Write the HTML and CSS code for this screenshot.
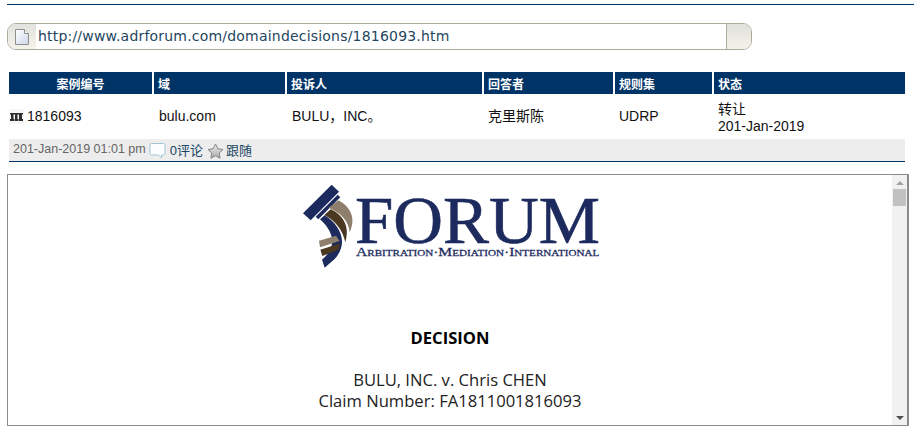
FILE: index.html
```html
<!DOCTYPE html>
<html lang="zh-CN">
<head>
    <meta charset="UTF-8">
    <title>1816093</title>
    <link rel="stylesheet" href="styles.css">
</head>
<body>

<div class="topline"></div>

<div class="urlbar">
    <div class="urlbar-left">
        <svg width="16" height="18" viewBox="0 0 16 18">
            <defs>
                <linearGradient id="page" x1="0" y1="0" x2="1" y2="1">
                    <stop offset="0" stop-color="#fff"/>
                    <stop offset="1" stop-color="#cdd6ec"/>
                </linearGradient>
            </defs>
            <path d="M1.500 1.500h9l4 4v11h-13z" fill="url(#page)" stroke="#8f8f8f"/>
            <path d="M10.500 1.500v4h4" fill="#fff" stroke="#8f8f8f"/>
        </svg>
    </div>
    <div class="urlbar-text">http://www.adrforum.com/domaindecisions/1816093.htm</div>
    <div class="urlbar-right"></div>
</div>

<table class="cases">
    <colgroup>
        <col class="c1"><col class="c2"><col class="c3"><col class="c4"><col class="c5"><col class="c6">
    </colgroup>
    <thead>
    <tr>
        <th class="center">案例编号</th>
        <th>域</th>
        <th>投诉人</th>
        <th>回答者</th>
        <th>规则集</th>
        <th>状态</th>
    </tr>
    </thead>
    <tbody>
    <tr>
        <td class="first">
            <span class="caseicon">
                <svg width="15" height="15" viewBox="0 0 15 15">
                    <path d="M1 4h13v1.500h-1V10h1v2H9.500v-2h.5V5.500H8.500V10H9v2H5.500v-2H6V5.500H4.500V10H5v2H1v-2h1V5.500H1z" fill="#2e2e2e"/>
                </svg>
            </span>1816093
        </td>
        <td class="domain">bulu.com</td>
        <td class="claimant">BULU，INC。</td>
        <td>克里斯陈</td>
        <td>UDRP</td>
        <td class="status">转让<br>201-Jan-2019</td>
    </tr>
    </tbody>
</table>

<div class="meta">
    <span class="date">201-Jan-2019 01:01 pm</span>
    <svg class="bubble" width="17" height="17" viewBox="0 0 17 17">
        <path d="M2.500 1.500h12a1.500 1.500 0 0 1 1.500 1.500v8.500a1.500 1.500 0 0 1-1.500 1.500h-2v3l-3-3h-7a1.500 1.500 0 0 1-1.500-1.500V3a1.500 1.500 0 0 1 1.500-1.500z" fill="#fbfdfe" stroke="#a4c2d4"/>
    </svg>
    <a class="metalink">0评论</a>
    <svg class="star" width="17" height="16" viewBox="0 0 17 16">
        <defs>
            <linearGradient id="star" x1="0" y1="0" x2="0" y2="1">
                <stop offset="0" stop-color="#eee"/>
                <stop offset="1" stop-color="#aaa"/>
            </linearGradient>
        </defs>
        <path d="M8.500 1l2.300 4.700 5.200.8-3.800 3.600.9 5.100-4.600-2.400-4.600 2.400.9-5.100L1 6.500l5.200-.8z" fill="url(#star)" stroke="#858585"/>
    </svg>
    <a class="metalink">跟随</a>
</div>

<div class="frame">
    <div class="doc">
        <svg class="logo" width="320" height="100" viewBox="0 0 960 300">
            <path d="M39 115L125 29 147 50 62 136z" fill="#1c2a5e"/>
            <path d="M77 125L143 59 151 67 85 133z" fill="#1c2a5e"/>
            <path d="M116 98L145 76C180 94 200 130 179 172 177 138 150 112 116 98z" fill="#8d7f6b"/>
            <path d="M103 120L122 103C154 118 182 148 166 202 158 164 135 136 103 120z" fill="#4a3820"/>
            <path d="M90 133L104 121C150 150 178 204 134 252L104 278 96 254C126 230 148 185 90 133z" fill="#1c2a5e"/>
            <path d="M87 197L138 182 149 198 90 217z" fill="#8d7f6b"/>
            <path d="M91 224L151 205 146 224 97 243z" fill="#4a3820"/>
            <text class="logo-name" x="195" y="205" textLength="735" lengthAdjust="spacingAndGlyphs">FORUM</text>
            <text class="logo-sub" x="198" y="243" textLength="730" lengthAdjust="spacingAndGlyphs">Arbitration·Mediation·International</text>
        </svg>
        <p class="title">DECISION</p>
        <p class="parties">BULU, INC. v. Chris CHEN<br>Claim Number: FA1811001816093</p>
    </div>
    <div class="scrollbar">
        <div class="arrow-up"></div>
        <div class="thumb"></div>
        <div class="arrow-down"></div>
    </div>
</div>

</body>
</html>
```

FILE: styles.css
```css
html, body {
    margin: 0;
    padding: 0;
    background-color: #fff;
}
body {
    font-family: "Liberation Sans", "Noto Sans CJK SC", sans-serif;
    font-size: 14px;
    color: #111;
    overflow: hidden;
}

.topline {
    height: 1px;
    margin: 4px 0 0 7px;
    background-color: #003366;
}

/* url bar */
.urlbar {
    display: flex;
    width: 745px;
    height: 27px;
    margin: 18px 0 0 7px;
    box-sizing: border-box;
    border: 1px solid #aeaa9c;
    border-radius: 9px;
    overflow: hidden;
}
.urlbar-left {
    display: flex;
    align-items: center;
    justify-content: center;
    width: 28px;
    background: linear-gradient(#e2e2de, #f4f3ea);
}
.urlbar-text {
    flex: 1;
    padding-left: 2px;
    font-family: "DejaVu Sans", sans-serif;
    font-size: 14px;
    letter-spacing: 0.2px;
    line-height: 24px;
    color: #24465f;
    background-color: #fff;
}
.urlbar-right {
    width: 24px;
    border-left: 1px solid #aeaa9c;
    background: linear-gradient(#e0e0dc, #f4f3ea);
}

/* table */
.cases {
    margin: 22px 0 0 7px;
    border-collapse: separate;
    border-spacing: 2px 0;
    table-layout: fixed;
    width: 900px;
}
.c1 { width: 143px; }
.c2 { width: 131px; }
.c3 { width: 195px; }
.c4 { width: 129px; }
.c5 { width: 97px; }
.c6 { width: 191px; }

.cases th {
    height: 22px;
    padding: 0 0 0 4px;
    background-color: #003366;
    color: #fff;
    font-size: 12px;
    font-weight: bold;
    text-align: left;
}
.cases th.center {
    padding: 0;
    text-align: center;
}
.cases td {
    height: 45px;
    padding: 0 0 0 4px;
    line-height: 17px;
}
.cases td.first {
    padding-left: 0;
}
.cases td.domain {
    padding-left: 5px;
}
.cases td.claimant {
    padding-left: 5px;
}
.cases td.status {
    padding-top: 2px;
    height: 43px;
}
.caseicon {
    display: inline-block;
    width: 15px;
    height: 15px;
    margin-right: 3px;
    vertical-align: -3px;
    background-color: #f6f6f6;
}

/* grey row */
.meta {
    display: flex;
    align-items: center;
    height: 22px;
    margin-left: 9px;
    margin-right: 9px;
    padding-left: 4px;
    background-color: #ededed;
    border-bottom: 1px solid #003366;
    font-size: 12.5px;
}
.date {
    color: #666;
    margin-bottom: 3px;
}
.bubble {
    margin: 1px 4px 0 3px;
}
.star {
    margin: 2px 2px 0 4px;
}
.metalink {
    color: #1a4766;
    font-size: 13px;
    margin-bottom: 1px;
}

/* document frame */
.frame {
    display: flex;
    height: 252px;
    margin: 12px 5px 0 7px;
    box-sizing: border-box;
    border: 1px solid #8a8a8a;
    border-right-width: 2px;
}
.doc {
    flex: 1;
    overflow: hidden;
    font-family: "Open Sans", sans-serif;
    font-size: 16.6px;
    line-height: 21px;
    color: #222;
    text-align: center;
}
.logo {
    display: block;
    margin: 0 auto;
}
.logo-name {
    font-family: "Liberation Serif", serif;
    font-size: 205px;
    fill: #1c2a5e;
    stroke: #1c2a5e;
    stroke-width: 2px;
}
.logo-sub {
    font-family: "Liberation Serif", serif;
    font-size: 38px;
    font-variant: small-caps;
    fill: #1c2a5e;
    stroke: #1c2a5e;
    stroke-width: 0.8px;
}
.title {
    margin: 52px 0 0 0;
    font-weight: bold;
    color: #000;
}
.parties {
    margin: 21px 0 0 0;
}

/* scrollbar */
.scrollbar {
    display: flex;
    flex-direction: column;
    align-items: center;
    width: 15px;
    background-color: #f1f1f1;
}
.thumb {
    width: 13px;
    height: 17px;
    margin-top: 4px;
    background-color: #c1c1c1;
}
.arrow-up, .arrow-down {
    width: 0;
    height: 0;
    border-left: 4px solid transparent;
    border-right: 4px solid transparent;
}
.arrow-up {
    margin-top: 6px;
    border-bottom: 4px solid #a3a3a3;
}
.arrow-down {
    margin-top: auto;
    margin-bottom: 5px;
    border-top: 4px solid #505050;
}
```
